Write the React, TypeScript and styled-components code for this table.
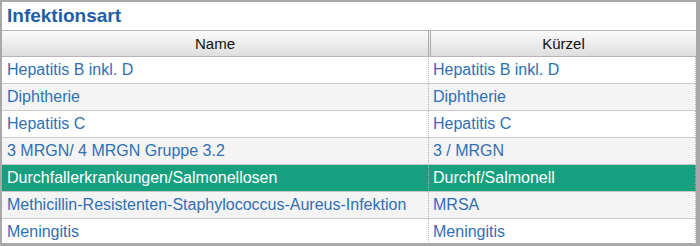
import React from "react";
import styled, { createGlobalStyle } from "styled-components";

const GlobalStyle = createGlobalStyle`
  html, body {
    margin: 0;
    padding: 0;
    background: #ffffff;
  }
  body {
    font-family: "Liberation Sans", Arial, sans-serif;
  }
`;

const Panel = styled.div`
  width: 700px;
  height: 246px;
  box-sizing: border-box;
  border: 2px solid #a9a9a9;
  border-right-width: 4px;
  border-bottom-width: 3px;
  background: #ffffff;
  display: flex;
  flex-direction: column;
  overflow: hidden;
`;

const Title = styled.div`
  height: 28px;
  flex-shrink: 0;
  padding-left: 5px;
  display: flex;
  align-items: center;
  font-size: 19px;
  font-weight: bold;
  color: #1d5ea6;
`;

const Table = styled.div`
  display: grid;
  grid-template-columns: 426px 1fr;
`;

const HeaderCell = styled.div<{ $first?: boolean }>`
  height: 27px;
  box-sizing: border-box;
  display: flex;
  align-items: center;
  justify-content: center;
  font-size: 15px;
  color: #111111;
  background: linear-gradient(#fbfbfb, #dedede);
  border-top: 1px solid #b5b5b5;
  border-bottom: 1px solid #b5b5b5;
  border-left: ${(p) => (p.$first ? "none" : "3px double #a8a8a8")};
`;

const Cell = styled.div<{ $shade: "white" | "gray" | "green"; $first?: boolean }>`
  height: 27px;
  box-sizing: border-box;
  padding-left: ${(p) => (p.$first ? "5px" : "4px")};
  display: flex;
  align-items: center;
  font-size: 16px;
  white-space: nowrap;
  overflow: hidden;
  color: ${(p) => (p.$shade === "green" ? "#ffffff" : "#2f6fb4")};
  background: ${(p) =>
    p.$shade === "green" ? "#16a07f" : p.$shade === "gray" ? "#f4f4f4" : "#ffffff"};
  border-bottom: 1px solid #c9c9c9;
  border-left: ${(p) => (p.$first ? "none" : "1px dotted #b0b0b0")};
  border-right: ${(p) => (p.$first ? "none" : "1px dotted #b0b0b0")};
`;

const rows = [
  { name: "Hepatitis B inkl. D", short: "Hepatitis B inkl. D" },
  { name: "Diphtherie", short: "Diphtherie" },
  { name: "Hepatitis C", short: "Hepatitis C" },
  { name: "3 MRGN/ 4 MRGN Gruppe 3.2", short: "3 / MRGN" },
  { name: "Durchfallerkrankungen/Salmonellosen", short: "Durchf/Salmonell" },
  { name: "Methicillin-Resistenten-Staphylococcus-Aureus-Infektion", short: "MRSA" },
  { name: "Meningitis", short: "Meningitis" },
];

const selected = 4;

export default function App() {
  return (
    <>
      <GlobalStyle />
      <Panel>
        <Title>Infektionsart</Title>
        <Table>
          <HeaderCell $first>Name</HeaderCell>
          <HeaderCell>Kürzel</HeaderCell>
          {rows.map((r, i) => {
            const shade = i === selected ? "green" : i % 2 === 1 ? "gray" : "white";
            return (
              <React.Fragment key={r.name}>
                <Cell $shade={shade} $first>
                  {r.name}
                </Cell>
                <Cell $shade={shade}>{r.short}</Cell>
              </React.Fragment>
            );
          })}
        </Table>
      </Panel>
    </>
  );
}
